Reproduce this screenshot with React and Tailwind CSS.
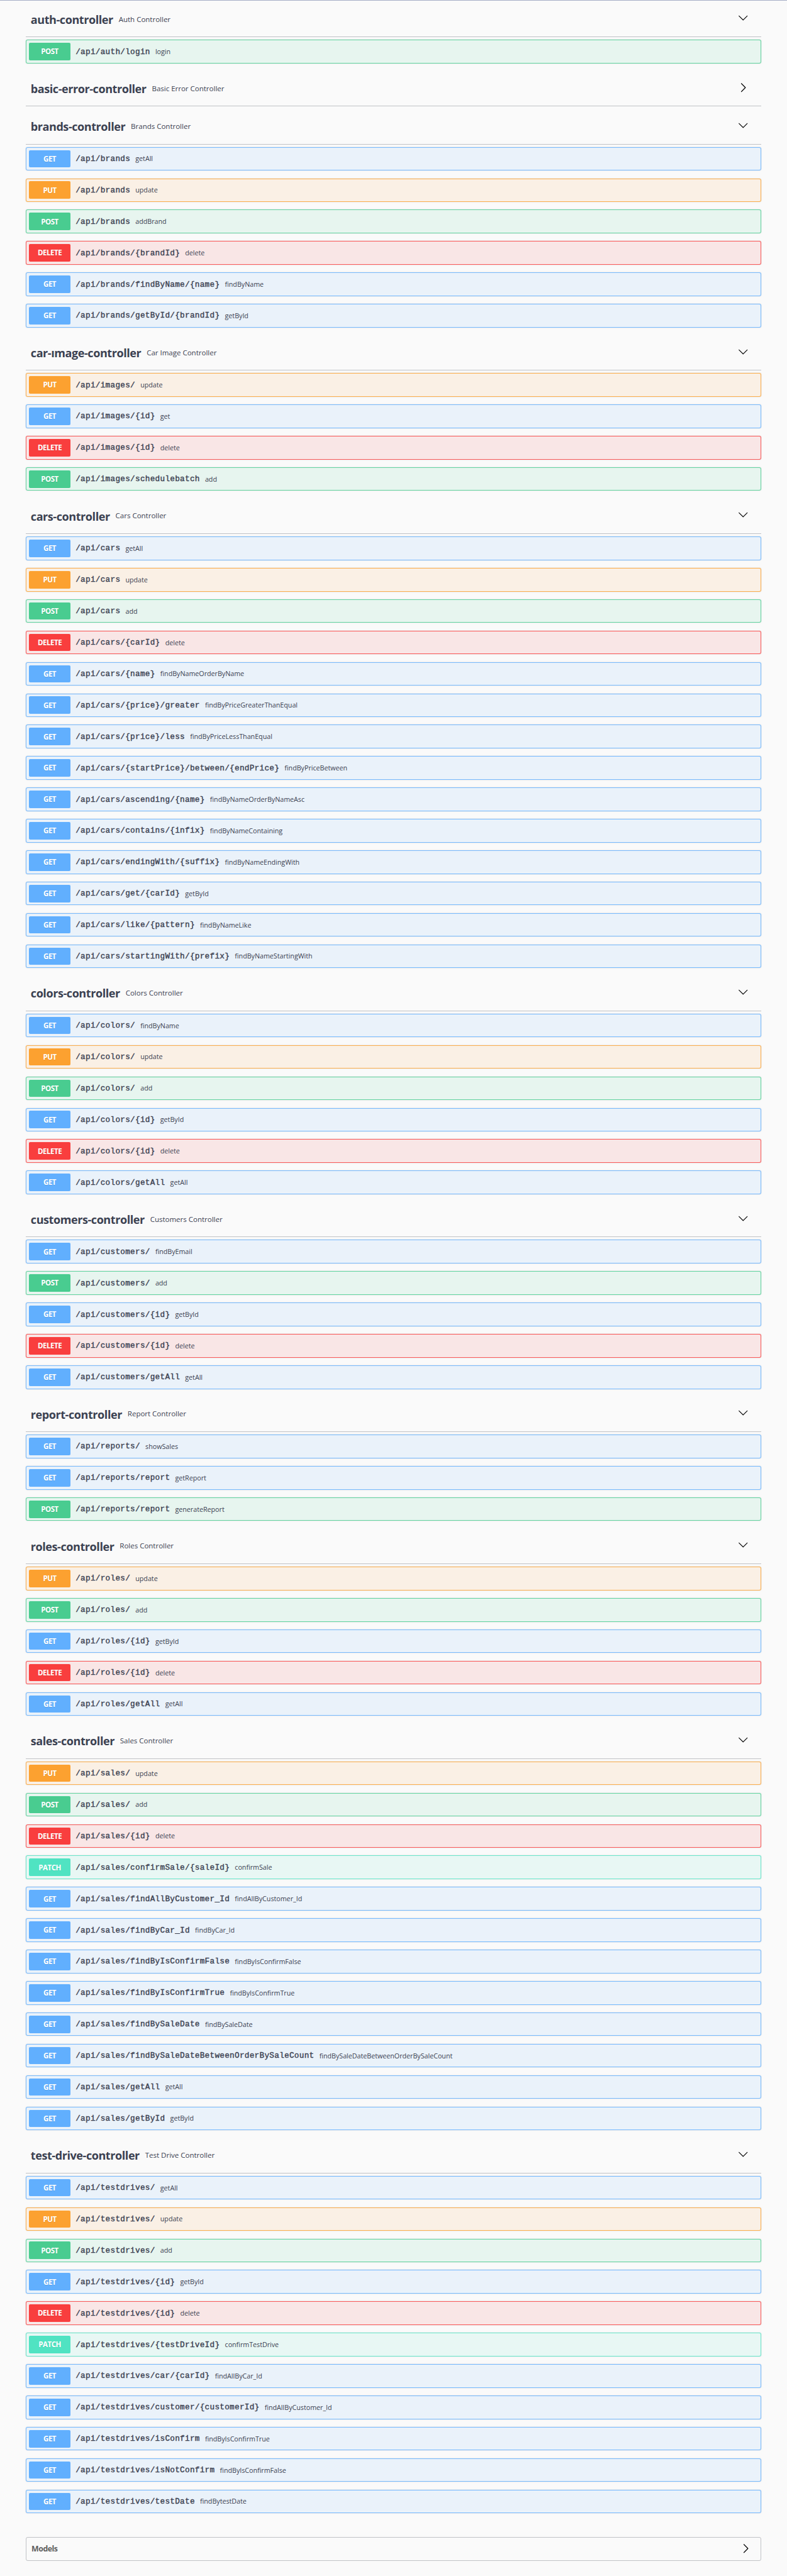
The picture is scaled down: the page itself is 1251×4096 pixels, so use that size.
const METHODS = {
  GET: {
    row: "border-[#61affe]/85 bg-[#61affe]/10",
    badge: "bg-[#61affe]",
  },
  POST: {
    row: "border-[#49cc90]/85 bg-[#49cc90]/10",
    badge: "bg-[#49cc90]",
  },
  PUT: {
    row: "border-[#fca130]/85 bg-[#fca130]/10",
    badge: "bg-[#fca130]",
  },
  DELETE: {
    row: "border-[#f93e3e]/85 bg-[#f93e3e]/10",
    badge: "bg-[#f93e3e]",
  },
  PATCH: {
    row: "border-[#50e3c2]/85 bg-[#50e3c2]/10",
    badge: "bg-[#50e3c2]",
  },
};

const SECTIONS = [
  {
    name: "auth-controller",
    description: "Auth Controller",
    operations: [["POST", "/api/auth/login", "login"]],
  },
  {
    name: "basic-error-controller",
    description: "Basic Error Controller",
    collapsed: true,
    operations: [],
  },
  {
    name: "brands-controller",
    description: "Brands Controller",
    operations: [
      ["GET", "/api/brands", "getAll"],
      ["PUT", "/api/brands", "update"],
      ["POST", "/api/brands", "addBrand"],
      ["DELETE", "/api/brands/{brandId}", "delete"],
      ["GET", "/api/brands/findByName/{name}", "findByName"],
      ["GET", "/api/brands/getById/{brandId}", "getById"],
    ],
  },
  {
    name: "car-ımage-controller",
    description: "Car Image Controller",
    operations: [
      ["PUT", "/api/images/", "update"],
      ["GET", "/api/images/{id}", "get"],
      ["DELETE", "/api/images/{id}", "delete"],
      ["POST", "/api/images/schedulebatch", "add"],
    ],
  },
  {
    name: "cars-controller",
    description: "Cars Controller",
    operations: [
      ["GET", "/api/cars", "getAll"],
      ["PUT", "/api/cars", "update"],
      ["POST", "/api/cars", "add"],
      ["DELETE", "/api/cars/{carId}", "delete"],
      ["GET", "/api/cars/{name}", "findByNameOrderByName"],
      ["GET", "/api/cars/{price}/greater", "findByPriceGreaterThanEqual"],
      ["GET", "/api/cars/{price}/less", "findByPriceLessThanEqual"],
      ["GET", "/api/cars/{startPrice}/between/{endPrice}", "findByPriceBetween"],
      ["GET", "/api/cars/ascending/{name}", "findByNameOrderByNameAsc"],
      ["GET", "/api/cars/contains/{infix}", "findByNameContaining"],
      ["GET", "/api/cars/endingWith/{suffix}", "findByNameEndingWith"],
      ["GET", "/api/cars/get/{carId}", "getById"],
      ["GET", "/api/cars/like/{pattern}", "findByNameLike"],
      ["GET", "/api/cars/startingWith/{prefix}", "findByNameStartingWith"],
    ],
  },
  {
    name: "colors-controller",
    description: "Colors Controller",
    operations: [
      ["GET", "/api/colors/", "findByName"],
      ["PUT", "/api/colors/", "update"],
      ["POST", "/api/colors/", "add"],
      ["GET", "/api/colors/{id}", "getById"],
      ["DELETE", "/api/colors/{id}", "delete"],
      ["GET", "/api/colors/getAll", "getAll"],
    ],
  },
  {
    name: "customers-controller",
    description: "Customers Controller",
    operations: [
      ["GET", "/api/customers/", "findByEmail"],
      ["POST", "/api/customers/", "add"],
      ["GET", "/api/customers/{id}", "getById"],
      ["DELETE", "/api/customers/{id}", "delete"],
      ["GET", "/api/customers/getAll", "getAll"],
    ],
  },
  {
    name: "report-controller",
    description: "Report Controller",
    operations: [
      ["GET", "/api/reports/", "showSales"],
      ["GET", "/api/reports/report", "getReport"],
      ["POST", "/api/reports/report", "generateReport"],
    ],
  },
  {
    name: "roles-controller",
    description: "Roles Controller",
    operations: [
      ["PUT", "/api/roles/", "update"],
      ["POST", "/api/roles/", "add"],
      ["GET", "/api/roles/{id}", "getById"],
      ["DELETE", "/api/roles/{id}", "delete"],
      ["GET", "/api/roles/getAll", "getAll"],
    ],
  },
  {
    name: "sales-controller",
    description: "Sales Controller",
    operations: [
      ["PUT", "/api/sales/", "update"],
      ["POST", "/api/sales/", "add"],
      ["DELETE", "/api/sales/{id}", "delete"],
      ["PATCH", "/api/sales/confirmSale/{saleId}", "confirmSale"],
      ["GET", "/api/sales/findAllByCustomer_Id", "findAllByCustomer_Id"],
      ["GET", "/api/sales/findByCar_Id", "findByCar_Id"],
      ["GET", "/api/sales/findByIsConfirmFalse", "findByIsConfirmFalse"],
      ["GET", "/api/sales/findByIsConfirmTrue", "findByIsConfirmTrue"],
      ["GET", "/api/sales/findBySaleDate", "findBySaleDate"],
      [
        "GET",
        "/api/sales/findBySaleDateBetweenOrderBySaleCount",
        "findBySaleDateBetweenOrderBySaleCount",
      ],
      ["GET", "/api/sales/getAll", "getAll"],
      ["GET", "/api/sales/getById", "getById"],
    ],
  },
  {
    name: "test-drive-controller",
    description: "Test Drive Controller",
    operations: [
      ["GET", "/api/testdrives/", "getAll"],
      ["PUT", "/api/testdrives/", "update"],
      ["POST", "/api/testdrives/", "add"],
      ["GET", "/api/testdrives/{id}", "getById"],
      ["DELETE", "/api/testdrives/{id}", "delete"],
      ["PATCH", "/api/testdrives/{testDriveId}", "confirmTestDrive"],
      ["GET", "/api/testdrives/car/{carId}", "findAllByCar_Id"],
      ["GET", "/api/testdrives/customer/{customerId}", "findAllByCustomer_Id"],
      ["GET", "/api/testdrives/isConfirm", "findByIsConfirmTrue"],
      ["GET", "/api/testdrives/isNotConfirm", "findByIsConfirmFalse"],
      ["GET", "/api/testdrives/testDate", "findBytestDate"],
    ],
  },
];

function ArrowDown() {
  return (
    <svg className="size-[16.5px] fill-black" viewBox="0 0 20 20" aria-hidden="true">
      <path d="M17.418 6.109c.272-.268.709-.268.979 0s.271.701 0 .969l-7.908 7.83c-.27.268-.707.268-.979 0l-7.908-7.83c-.27-.268-.27-.701 0-.969.271-.268.709-.268.979 0L10 13.25l7.418-7.141z" />
    </svg>
  );
}

function ArrowRight() {
  return (
    <svg className="size-[16.5px] fill-black" viewBox="0 0 20 20" aria-hidden="true">
      <path d="M13.25 10L6.109 2.58c-.268-.27-.268-.707 0-.979.268-.27.701-.27.969 0l7.83 7.908c.268.271.268.709 0 .979l-7.83 7.908c-.268.271-.701.27-.969 0-.268-.269-.268-.707 0-.979L13.25 10z" />
    </svg>
  );
}

function Operation({ method, path, summary }) {
  const style = METHODS[method];
  return (
    <div
      className={`flex h-[37.55px] items-center rounded-[3px] border pr-1 pl-[4.3px] shadow-[0_0_2px_rgba(0,0,0,0.19)] ${style.row}`}
    >
      <span
        className={`flex h-[27.7px] w-[65.9px] shrink-0 items-center justify-center rounded-[2px] font-['Open_Sans',sans-serif] text-[11.5px] font-bold tracking-[-0.45px] text-white [text-shadow:0_1px_0_rgba(0,0,0,0.1)] ${style.badge}`}
      >
        {method}
      </span>
      <span className="pt-[2px] pl-[8.2px] font-['Liberation_Mono',monospace] text-[12.6px] tracking-[0.344px] text-[#3b4151] [-webkit-text-stroke:0.4px_#3b4151]">
        {path}
      </span>
      <span className="pl-[8.2px] font-['Open_Sans',sans-serif] text-[10.7px] text-[#3b4151]">
        {summary}
      </span>
    </div>
  );
}

function Section({ name, description, collapsed, operations }) {
  return (
    <section>
      <h3 className="mb-[4.12px] flex h-[56.16px] items-start border-b border-[#3b4151]/30 pr-[21px] pl-[8px] font-['Open_Sans',sans-serif] text-[#3b4151]">
        <span className="pt-[15.9px] text-[18px] leading-[24px] font-bold tracking-[-0.42px]">
          {name}
        </span>
        <small className="flex-1 pt-[16.6px] pl-[8.9px] text-[11.5px] leading-[21px] font-normal">
          {description}
        </small>
        <span className="pt-[17.5px]">{collapsed ? <ArrowRight /> : <ArrowDown />}</span>
      </h3>
      {operations.length > 0 && (
        <div className="flex flex-col gap-[12.35px] pb-[12.35px]">
          {operations.map(([method, path, summary]) => (
            <Operation key={method + path} method={method} path={path} summary={summary} />
          ))}
        </div>
      )}
    </section>
  );
}

export default function App() {
  return (
    <main className="min-h-[4096px] border-t border-[#a5adc6] bg-[#fafafa] px-[40.8px] pt-[1.97px]">
      {SECTIONS.map((section) => (
        <Section key={section.name} {...section} />
      ))}
      <section className="mt-[25.1px] flex h-[37.9px] items-center justify-between rounded-[3px] border border-[#3b4151]/30 pr-[16px] pl-[8.3px]">
        <h4 className="pt-[1px] font-['Open_Sans',sans-serif] text-[12.3px] font-bold tracking-[-0.45px] text-[#606060]">
          Models
        </h4>
        <ArrowRight />
      </section>
    </main>
  );
}
